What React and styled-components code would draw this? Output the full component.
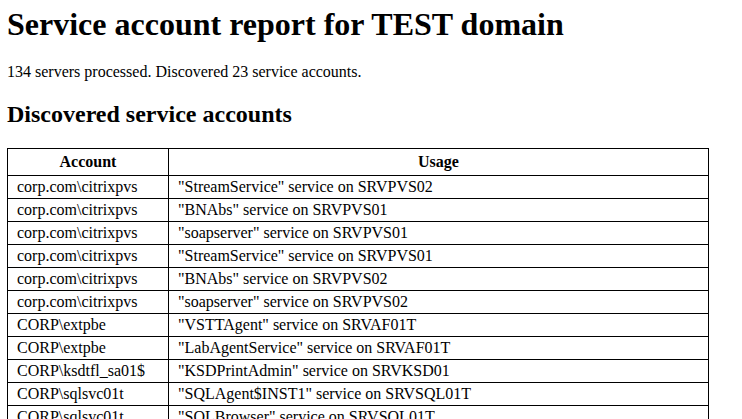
import React from 'react';
import styled, { createGlobalStyle } from 'styled-components';

const GlobalStyle = createGlobalStyle`
  body {
    margin: 0;
    padding: 7px;
    background: #fff;
    color: #000;
    font-family: "Liberation Serif", "Times New Roman", serif;
    font-size: 16px;
  }
`;

const Title = styled.h1`
  font-size: 32px;
  font-weight: bold;
  margin: -1px 0 20px 0;
`;

const Summary = styled.p`
  margin: 0 0 20px 0;
`;

const SectionTitle = styled.h2`
  font-size: 24px;
  font-weight: bold;
  margin: 0 0 20px 0;
`;

const Table = styled.table`
  border-collapse: collapse;
  width: 702px;
`;

const HeadCell = styled.th`
  border: 1px solid #000;
  padding: 4px 9px;
  font-weight: bold;
  text-align: center;
  width: ${(p) => p.$width || 'auto'};
`;

const Cell = styled.td`
  border: 1px solid #000;
  padding: 2px 9px;
  text-align: left;
`;

const rows = [
  ['corp.com\\citrixpvs', '"StreamService" service on SRVPVS02'],
  ['corp.com\\citrixpvs', '"BNAbs" service on SRVPVS01'],
  ['corp.com\\citrixpvs', '"soapserver" service on SRVPVS01'],
  ['corp.com\\citrixpvs', '"StreamService" service on SRVPVS01'],
  ['corp.com\\citrixpvs', '"BNAbs" service on SRVPVS02'],
  ['corp.com\\citrixpvs', '"soapserver" service on SRVPVS02'],
  ['CORP\\extpbe', '"VSTTAgent" service on SRVAF01T'],
  ['CORP\\extpbe', '"LabAgentService" service on SRVAF01T'],
  ['CORP\\ksdtfl_sa01$', '"KSDPrintAdmin" service on SRVKSD01'],
  ['CORP\\sqlsvc01t', '"SQLAgent$INST1" service on SRVSQL01T'],
  ['CORP\\sqlsvc01t', '"SQLBrowser" service on SRVSQL01T'],
  ['CORP\\sqlsvc01t', '"MSSQL$INST1" service on SRVSQL01T'],
];

export default function App() {
  return (
    <>
      <GlobalStyle />
      <Title>Service account report for TEST domain</Title>
      <Summary>134 servers processed. Discovered 23 service accounts.</Summary>
      <SectionTitle>Discovered service accounts</SectionTitle>
      <Table>
        <thead>
          <tr>
            <HeadCell $width="142px">Account</HeadCell>
            <HeadCell>Usage</HeadCell>
          </tr>
        </thead>
        <tbody>
          {rows.map(([account, usage], i) => (
            <tr key={i}>
              <Cell>{account}</Cell>
              <Cell>{usage}</Cell>
            </tr>
          ))}
        </tbody>
      </Table>
    </>
  );
}
